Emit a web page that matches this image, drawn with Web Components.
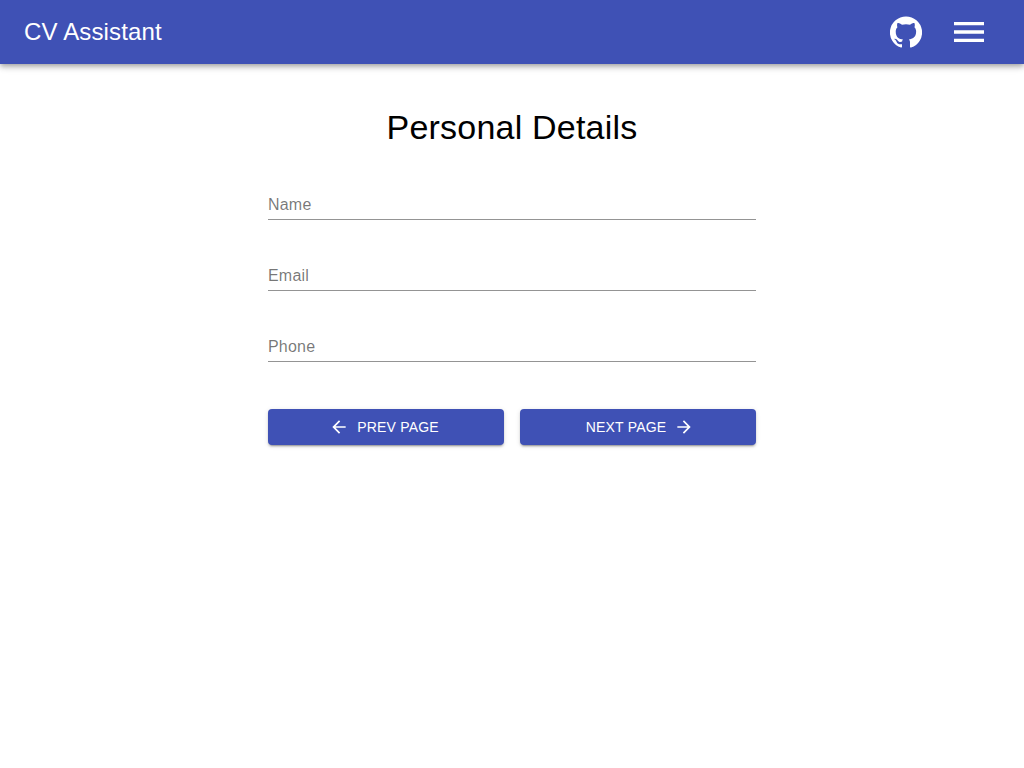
<!DOCTYPE html>
<html lang="en">
<head>
<meta charset="utf-8">
<title>CV Assistant</title>
<style>
html,body{margin:0;padding:0;background:#fff;height:100%;}
body{font-family:"Liberation Sans",Arial,sans-serif;}
</style>
</head>
<body>
<cv-app>
  <cv-appbar title="CV Assistant"></cv-appbar>
  <cv-page heading="Personal Details">
    <cv-field label="Name"></cv-field>
    <cv-field label="Email"></cv-field>
    <cv-field label="Phone"></cv-field>
    <cv-actions slot="actions">
      <cv-button icon="back">PREV PAGE</cv-button>
      <cv-button icon="next">NEXT PAGE</cv-button>
    </cv-actions>
  </cv-page>
</cv-app>
<script>
function def(name, html, init){
  customElements.define(name, class extends HTMLElement{
    constructor(){super();this.attachShadow({mode:'open'}).innerHTML=html;}
    connectedCallback(){ if(init) init.call(this,this.shadowRoot); }
  });
}
def('cv-app',`<style>:host{display:block;min-height:768px;background:#fff;}</style><slot></slot>`);
def('cv-appbar',`<style>
:host{display:flex;align-items:center;height:64px;box-sizing:border-box;padding:0 24px;background:#3f51b5;color:#fff;
  box-shadow:0 2px 4px -1px rgba(0,0,0,.2),0 4px 5px 0 rgba(0,0,0,.14),0 1px 10px 0 rgba(0,0,0,.12);position:relative;}
.t{flex:1;font:400 24px/32px "Liberation Sans",Arial,sans-serif;letter-spacing:.15px;}
.b{display:flex;align-items:center;justify-content:center;}
.gh{width:32px;height:32px;margin-right:27px;}
.menu{width:40px;height:40px;margin-right:11px;}
svg{display:block;fill:#fff;}
</style>
<div class="t"></div>
<div class="b gh"><svg width="32" height="32" viewBox="0 0 24 24"><path d="M12 .3a12 12 0 0 0-3.8 23.4c.6.1.8-.3.8-.6v-2c-3.3.7-4-1.6-4-1.6-.6-1.4-1.4-1.8-1.4-1.8-1-.7.1-.7.1-.7 1.2 0 1.9 1.2 1.9 1.2 1 1.8 2.8 1.3 3.5 1 0-.8.4-1.3.7-1.6-2.7-.3-5.5-1.3-5.5-6 0-1.2.5-2.3 1.3-3.1-.2-.4-.6-1.6 0-3.2 0 0 1-.3 3.4 1.2a11.5 11.5 0 0 1 6 0c2.3-1.5 3.3-1.2 3.3-1.2.6 1.6.2 2.8 0 3.2.9.8 1.3 1.9 1.3 3.2 0 4.6-2.8 5.6-5.5 5.9.5.4.9 1 .9 2.2v3.3c0 .3.1.7.8.6A12 12 0 0 0 12 .3"/></svg></div>
<div class="b menu"><svg width="40" height="40" viewBox="0 0 24 24"><path d="M3 18h18v-2H3v2zm0-5h18v-2H3v2zm0-7v2h18V6H3z"/></svg></div>`,
function(r){r.querySelector('.t').textContent=this.getAttribute('title');});
def('cv-page',`<style>
:host{display:block;width:488px;margin:0 auto;}
h1{margin:0;padding-top:43px;height:40px;font:400 34px/40px "Liberation Sans",Arial,sans-serif;letter-spacing:.2px;color:#000;text-align:center;}
.f{display:flex;flex-direction:column;gap:35px;padding-top:37px;}
.a{padding-top:47px;}
</style><h1></h1><div class="f"><slot></slot></div><div class="a"><slot name="actions"></slot></div>`,
function(r){r.querySelector('h1').textContent=this.getAttribute('heading');});
def('cv-field',`<style>
:host{display:block;height:36px;box-sizing:border-box;border-bottom:1px solid rgba(0,0,0,.42);position:relative;}
.l{position:absolute;left:0;bottom:5px;font:400 16px/19px "Liberation Sans",Arial,sans-serif;letter-spacing:.2px;color:rgba(0,0,0,.54);}
</style><div class="l"></div>`,
function(r){r.querySelector('.l').textContent=this.getAttribute('label');});
def('cv-actions',`<style>:host{display:grid;grid-template-columns:1fr 1fr;gap:16px;}</style><slot></slot>`);
def('cv-button',`<style>
:host{display:flex;align-items:center;justify-content:center;height:36px;background:#3f51b5;color:#fff;border-radius:4px;
 font:400 14px/16px "Liberation Sans",Arial,sans-serif;letter-spacing:.2px;
 box-shadow:0 3px 1px -2px rgba(0,0,0,.2),0 2px 2px 0 rgba(0,0,0,.14),0 1px 5px 0 rgba(0,0,0,.12);}
svg{display:block;width:20px;height:20px;fill:#fff;}
.s{margin-right:8px;margin-left:-4px;}
.e{margin-left:8px;margin-right:-4px;}
</style><span class="i1"></span><slot></slot><span class="i2"></span>`,
function(r){
  const back=this.getAttribute('icon')==='back';
  const svg=(c,d)=>`<svg class="${c}" viewBox="0 0 24 24"><path d="${d}"/></svg>`;
  if(back) r.querySelector('.i1').innerHTML=svg('s','M20 11H7.83l5.59-5.59L12 4l-8 8 8 8 1.41-1.41L7.83 13H20v-2z');
  else r.querySelector('.i2').innerHTML=svg('e','M12 4l-1.41 1.41L16.17 11H4v2h12.17l-5.58 5.59L12 20l8-8z');
});
</script>
</body>
</html>
